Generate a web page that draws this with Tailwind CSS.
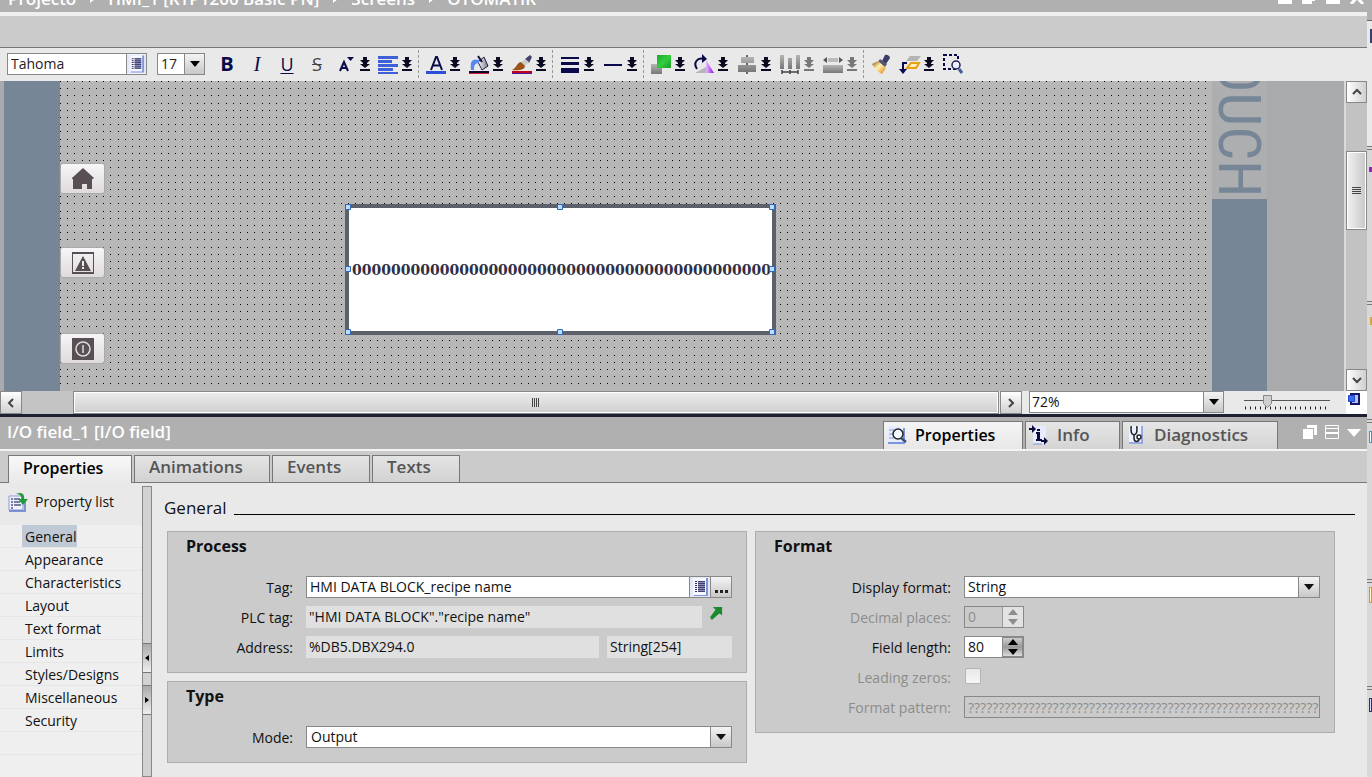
<!DOCTYPE html>
<html lang="en">
<head>
<meta charset="utf-8">
<title>HMI screen editor</title>
<script src="https://cdn.jsdelivr.net/npm/@tailwindcss/browser@4"></script>
</head>
<body class="flex h-screen overflow-hidden bg-[#e9e9e9] font-['Open_Sans','Noto_Sans',sans-serif] text-[14px] leading-5 text-[#111]">
<svg class="absolute h-0 w-0" aria-hidden="true">
  <defs>
    <linearGradient id="gGreen" x1="0" y1="0" x2="1" y2="1"><stop offset="0" stop-color="#1fa52e"/><stop offset=".5" stop-color="#31cf3d"/><stop offset="1" stop-color="#1a9a2a"/></linearGradient>
    <linearGradient id="gGray" x1="0" y1="0" x2="0" y2="1"><stop offset="0" stop-color="#b5b5b5"/><stop offset="1" stop-color="#777"/></linearGradient>
    <linearGradient id="gGold" x1="0" y1="0" x2="1" y2="1"><stop offset="0" stop-color="#8a4a10"/><stop offset=".45" stop-color="#fff3b0"/><stop offset="1" stop-color="#e07808"/></linearGradient>
    <linearGradient id="gPurple" x1="0" y1="0" x2="1" y2="0"><stop offset="0" stop-color="#e9b8ff"/><stop offset="1" stop-color="#8b12e8"/></linearGradient>
    <linearGradient id="gPot" x1="0" y1="0" x2="1" y2="0"><stop offset="0" stop-color="#fff"/><stop offset="1" stop-color="#77778c"/></linearGradient>
    <symbol id="drop" viewBox="0 0 10 14"><path d="M3 0h4v3h3L7 6v1h3L5 11 0 7h3V6L0 3h3z" fill="currentColor"/><path d="M0 12h10v2H0z" fill="currentColor"/></symbol>
    <symbol id="list" viewBox="0 0 20 20"><rect width="20" height="20" fill="#e4e8fb"/><rect x="3" y="1" width="13" height="17" fill="#f7f8ff"/><path d="M16 1h2v18H4v-1h12z" fill="#7f96dc"/><path d="M5 4h2v1H5zM8 4h7v1H8zM5 6h2v1H5zM8 6h7v1H8zM5 8h2v1H5zM8 8h7v1H8zM5 10h2v1H5zM8 10h7v1H8zM5 12h2v1H5zM8 12h7v1H8zM5 14h2v1H5zM8 14h7v1H8z" fill="#33335f"/><path d="M8 4h7v11H8z" fill="#4a4a80" opacity=".6"/></symbol>
    <symbol id="tri" viewBox="0 0 10 6"><path d="M0 0h10L5 6z" fill="currentColor"/></symbol>
    <symbol id="chev" viewBox="0 0 10 10"><path d="M1 7l4-4 4 4" fill="none" stroke="#444" stroke-width="2"/></symbol>
  </defs>
</svg>

<div class="flex min-w-0 flex-1 flex-col">
  <!-- breadcrumb -->
  <header class="flex h-3 shrink-0 items-end justify-between overflow-hidden bg-[#b0b0b0] pr-[2px] pl-2 text-white">
    <nav class="mb-[3px] flex items-center gap-3 text-[17px] leading-5 font-semibold" aria-label="Path">
      <a href="#">Projecto</a><svg class="h-2 w-2" viewBox="0 0 8 8"><path d="M2 0l5 4-5 4z" fill="#fff"/></svg>
      <a href="#">HMI_1 [KTP1200 Basic PN]</a><svg class="h-2 w-2" viewBox="0 0 8 8"><path d="M2 0l5 4-5 4z" fill="#fff"/></svg>
      <a href="#">Screens</a><svg class="h-2 w-2" viewBox="0 0 8 8"><path d="M2 0l5 4-5 4z" fill="#fff"/></svg>
      <a href="#">OTOMATIK</a>
    </nav>
    <div class="mb-2 flex items-end gap-2">
      <button aria-label="Minimize"><svg class="block h-3 w-4" viewBox="0 0 16 12"><path d="M1 8h14v4H1z" fill="#fff"/></svg></button>
      <button aria-label="Restore"><svg class="block h-3 w-4" viewBox="0 0 16 12"><path d="M4 0h10v9h-3v3H1V4h3z" fill="#fff"/></svg></button>
      <button aria-label="Maximize"><svg class="block h-3 w-4" viewBox="0 0 16 12"><path d="M1 0h14v12H1z" fill="#fff"/></svg></button>
      <button aria-label="Close"><svg class="block h-3 w-4" viewBox="0 0 16 12"><path d="M2 -1l12 13M14 -1L2 12" stroke="#fff" stroke-width="3"/></svg></button>
    </div>
  </header>
  <div class="h-9 shrink-0 border-t-4 border-b border-t-[#f0f0f0] border-b-[#777] bg-[#cbcbcb]"></div>

  <!-- toolbar -->
  <div class="flex h-[33px] shrink-0 items-center pb-px pl-[7px] text-[#0a0a4a]" role="toolbar" aria-label="Format">
    <div class="flex h-[22px] w-[140px] border border-[#888] bg-white">
      <input class="min-w-0 flex-1 pl-[3px] text-[#222] outline-none" aria-label="Font" value="Tahoma">
      <button class="w-5 border-l border-[#888]" aria-label="Font list"><svg class="block h-5 w-full"><use href="#list"/></svg></button>
    </div>
    <div class="ml-[10px] flex h-[22px] w-12 border border-[#888] bg-white">
      <input class="min-w-0 flex-1 pl-[3px] text-[#222] outline-none" aria-label="Font size" value="17">
      <button class="flex w-5 items-center justify-center border-l border-[#888] bg-linear-to-b from-[#f4f4f4] to-[#c8c8c8] text-black" aria-label="Font sizes"><svg class="h-[6px] w-[10px]"><use href="#tri"/></svg></button>
    </div>
    <div class="ml-[10px] flex items-center gap-[6px] text-[20px] leading-6">
      <button class="w-6 font-bold">B</button>
      <button class="w-6 font-['Liberation_Serif',serif] italic">I</button>
      <button class="w-6 text-[18px] underline underline-offset-2">U</button>
      <button class="w-6 text-[18px] text-[#444] line-through">S</button>
      <button class="flex items-center" aria-label="Text size"><svg class="h-6 w-6" viewBox="0 0 24 24"><path d="M5 19L9 10h0l4 9M6.500 16h5" fill="none" stroke="#0a0a4a" stroke-width="2"/><path d="M12 5h7l-3.500 4z" fill="#0a0a4a"/></svg><svg class="mr-[3px] ml-px h-[14px] w-[10px] text-[#0a0a20]"><use href="#drop"/></svg></button>
    </div>
    <div class="ml-[3px] flex items-center">
      <button class="flex items-center" aria-label="Align text"><svg class="h-6 w-6" viewBox="0 0 24 24"><path d="M2 4h20v3H2zM2 8h14v3H2zM2 12h20v3H2zM2 16h15v3H2zM2 20h20v2H2z" fill="#3f5fd8"/></svg><svg class="mx-[2px] h-[14px] w-[10px] text-[#0a0a20]"><use href="#drop"/></svg></button>
    </div>
    <span class="mr-[5px] ml-1 h-7 border-l border-dashed border-[#999]"></span>
    <div class="flex items-center gap-[5px]">
      <button class="flex items-center" aria-label="Text colour"><svg class="h-6 w-6" viewBox="0 0 24 24"><path d="M7 18l5-13h1l5 13M9 13.500h7" fill="none" stroke="#0a0a4a" stroke-width="2"/><path d="M2 19h20v3H2z" fill="#2b50d8"/></svg><svg class="mx-[2px] h-[14px] w-[10px] text-[#0a0a20]"><use href="#drop"/></svg></button>
      <button class="flex items-center" aria-label="Fill colour"><svg class="h-6 w-6" viewBox="0 0 24 24"><path d="M11 10l6-5 4 9-6 4z" fill="url(#gPot)" stroke="#222244"/><path d="M11 4l4 6" stroke="#111133" stroke-width="2"/><path d="M12 8C5 6 3 9 4 18h3c0-5 1-7 5-7z" fill="#5a86f0"/><path d="M2 19h20v2H2z" fill="#080830"/><path d="M2 21h20v1H2z" fill="#d02030"/></svg><svg class="mx-[2px] h-[14px] w-[10px] text-[#0a0a20]"><use href="#drop"/></svg></button>
      <button class="flex items-center" aria-label="Line colour"><svg class="h-6 w-6" viewBox="0 0 24 24"><path d="M20 3l-5 4 4 4 3-6z" fill="#43436c"/><path d="M15 7l-4 4 4 3 4-4z" fill="#ccc"/><path d="M11 10c-5 1-4 6-9 8 6 1 13 0 13-4z" fill="#9a5418"/><path d="M2 19h20v2H2z" fill="#c00018"/><path d="M2 21h20v1H2z" fill="#4818a0"/></svg><svg class="mx-[2px] h-[14px] w-[10px] text-[#0a0a20]"><use href="#drop"/></svg></button>
    </div>
    <span class="mr-[5px] ml-1 h-7 border-l border-dashed border-[#999]"></span>
    <div class="flex items-center gap-[5px]">
      <button class="flex items-center" aria-label="Line width"><svg class="h-6 w-6" viewBox="0 0 24 24"><path d="M3 5h18v2H3zM3 10h18v3H3zM3 16h18v5H3z" fill="#0a0a4a"/></svg><svg class="mx-[2px] h-[14px] w-[10px] text-[#0a0a20]"><use href="#drop"/></svg></button>
      <button class="flex items-center" aria-label="Line style"><svg class="h-6 w-6" viewBox="0 0 24 24"><path d="M3 12h18v2H3z" fill="#0a0a4a"/></svg><svg class="mx-[2px] h-[14px] w-[10px] text-[#0a0a20]"><use href="#drop"/></svg></button>
    </div>
    <span class="mr-[5px] ml-1 h-7 border-l border-dashed border-[#999]"></span>
    <div class="flex items-center gap-[5px]">
      <button class="flex items-center" aria-label="Order"><svg class="h-6 w-6" viewBox="0 0 24 24"><path d="M2 12h11v10H2z" fill="url(#gGray)"/><path d="M8 3h14v13H8z" fill="url(#gGreen)"/></svg><svg class="mx-[2px] h-[14px] w-[10px] text-[#0a0a20]"><use href="#drop"/></svg></button>
      <button class="flex items-center" aria-label="Rotate"><svg class="h-6 w-6" viewBox="0 0 24 24"><path d="M3 21h11v-6z" fill="#b5b5b5"/><path d="M14 8v13h8z" fill="url(#gPurple)"/><path d="M5 17C1 11 5 5 12 7" fill="none" stroke="#0a0a4a" stroke-width="2"/><path d="M10 2v9l5-4z" fill="#0a0a4a"/></svg><svg class="mx-[2px] h-[14px] w-[10px] text-[#0a0a20]"><use href="#drop"/></svg></button>
      <button class="flex items-center" aria-label="Align objects"><svg class="h-6 w-6" viewBox="0 0 24 24"><path d="M11 3h2v19h-2z" fill="#666"/><path d="M6 5h13v6H6zM3 13h18v7H3z" fill="url(#gGray)"/></svg><svg class="mx-[2px] h-[14px] w-[10px] text-[#0a0a20]"><use href="#drop"/></svg></button>
      <button class="flex items-center" aria-label="Distribute"><svg class="h-6 w-6" viewBox="0 0 24 24"><path d="M2 3h4v14H2zM10 6h4v11h-4zM18 3h4v14h-4z" fill="url(#gGray)"/><path d="M4 20h16M4 18v4M12 18v4M20 18v4" stroke="#444" stroke-width="1.500"/></svg><svg class="mx-[2px] h-[14px] w-[10px] text-[#777]"><use href="#drop"/></svg></button>
      <button class="flex items-center" aria-label="Match size"><svg class="h-6 w-6" viewBox="0 0 24 24"><path d="M7 6h10v4H7z" fill="#bbb"/><path d="M6 5v6L2 8zM18 5v6l4-3z" fill="#555"/><path d="M2 13h20v8H2z" fill="url(#gGray)"/></svg><svg class="mx-[2px] h-[14px] w-[10px] text-[#777]"><use href="#drop"/></svg></button>
    </div>
    <span class="mr-[5px] ml-1 h-7 border-l border-dashed border-[#999]"></span>
    <div class="flex items-center gap-[5px]">
      <button aria-label="Format painter"><svg class="h-6 w-6" viewBox="0 0 24 24"><path d="M13 9l3-6c2-1 5 1 5 3l-4 6z" fill="#3c3c66"/><path d="M11 7l7 5-2 3-7-5z" fill="#555570"/><path d="M9 9l8 7-4 6C9 20 5 16 3 12z" fill="url(#gGold)"/></svg></button>
      <button class="flex items-center" aria-label="Layers"><svg class="h-6 w-6" viewBox="0 0 24 24"><path d="M12 4h11l-4 5H8z" fill="#b5b5b5"/><path d="M13 11h8l-3 5h-9z" fill="#fff0c0" stroke="#eaa010" stroke-width="2"/><path d="M5 10v8M5 11h4" stroke="#0a0a4a" stroke-width="2"/><path d="M1 17h8l-4 5z" fill="#0a0a4a"/></svg><svg class="mx-[2px] h-[14px] w-[10px] text-[#0a0a20]"><use href="#drop"/></svg></button>
      <button aria-label="Zoom selection"><svg class="h-6 w-6" viewBox="0 0 24 24"><path d="M3 3h14v14H3z" fill="none" stroke="#0a0a4a" stroke-width="2" stroke-dasharray="3 2"/><circle cx="15" cy="13" r="4" fill="#edf1ff" stroke="#222252" stroke-width="1.500"/><path d="M18 17l3 4" stroke="#44628e" stroke-width="3"/></svg></button>
    </div>
  </div>

  <!-- design canvas -->
  <div class="flex h-[310px] shrink-0">
    <div class="relative flex min-w-0 flex-1 overflow-hidden bg-[#a8aaab]">
      <div class="ml-1 w-14 shrink-0 bg-[#778696]"></div>
      <svg class="h-full min-w-0 flex-1 bg-[#b7b7b7]" aria-hidden="true">
        <pattern id="dots" width="36" height="36" patternUnits="userSpaceOnUse"><path shape-rendering="crispEdges" fill="#000" d="M0 0h1v1H0zM7 0h1v1H7zM14 0h1v1h-1zM22 0h1v1h-1zM29 0h1v1h-1zM0 7h1v1H0zM7 7h1v1H7zM14 7h1v1h-1zM22 7h1v1h-1zM29 7h1v1h-1zM0 14h1v1H0zM7 14h1v1H7zM14 14h1v1h-1zM22 14h1v1h-1zM29 14h1v1h-1zM0 22h1v1H0zM7 22h1v1H7zM14 22h1v1h-1zM22 22h1v1h-1zM29 22h1v1h-1zM0 29h1v1H0zM7 29h1v1H7zM14 29h1v1h-1zM22 29h1v1h-1zM29 29h1v1h-1z"/></pattern>
        <rect width="100%" height="100%" fill="url(#dots)"/>
      </svg>
      <div class="flex w-[55px] shrink-0 flex-col">
        <div class="flex h-[118px] flex-col items-center justify-end overflow-hidden bg-[#acaeaf]"><span class="[writing-mode:vertical-rl] pb-[2px] font-['Roboto_Condensed','Open_Sans_Condensed','Liberation_Sans_Narrow','Liberation_Sans',sans-serif] text-[60px] leading-[55px] text-[#778696]">TOUCH</span></div>
        <div class="flex-1 bg-[#778696]"></div>
      </div>
      <div class="w-[77px] shrink-0"></div>

      <!-- objects on the screen -->
      <button class="absolute top-[83px] left-[61px] flex h-[29px] w-[43px] items-center justify-center rounded-[2px] bg-linear-to-b from-[#f7f5f7] to-[#dfdbdd] shadow-[0_0_1px_1px_#aaa]" aria-label="Home"><svg class="h-[22px] w-[22px]" viewBox="0 0 22 22"><path d="M11 0l11 10-1 1h-1v10h-5v-5h-5v5H1V11H0v-1z" fill="#574f53"/></svg></button>
      <button class="absolute top-[167px] left-[61px] flex h-[29px] w-[43px] items-center justify-center rounded-[2px] bg-linear-to-b from-[#f7f5f7] to-[#dfdbdd] shadow-[0_0_1px_1px_#aaa]" aria-label="Alarms"><svg class="h-[22px] w-[22px]" viewBox="0 0 22 22"><path d="M.5 1.500h21v19H.5z" fill="none" stroke="#574f53"/><path d="M0 0h22v2H0zM0 20h22v2H0z" fill="#574f53"/><path d="M11 4l8 15H3z" fill="#574f53"/><path d="M10 9h2v5h-2zM10 15h2v2h-2z" fill="#eee"/></svg></button>
      <button class="absolute top-[253px] left-[61px] flex h-[29px] w-[43px] items-center justify-center rounded-[2px] bg-linear-to-b from-[#f7f5f7] to-[#dfdbdd] shadow-[0_0_1px_1px_#aaa]" aria-label="Power"><svg class="h-[22px] w-[22px]" viewBox="0 0 22 22"><path d="M0 0h22v22H0z" fill="#574f53"/><circle cx="11" cy="11" r="7" fill="none" stroke="#ddd" stroke-width="1.500"/><path d="M11 7v8" stroke="#ddd" stroke-width="1.500"/></svg></button>
      <div class="absolute top-[123px] left-[345px] h-[131px] w-[431px] border-4 border-[#5c616c] bg-white">
        <div class="flex h-full items-center overflow-hidden pl-[3px] font-['DejaVu_Serif',serif] text-[14px] font-bold whitespace-nowrap text-[#302f45]">00000000000000000000000000000000000000000000</div>
        <svg class="absolute -top-1 -left-1 h-[131px] w-[431px]" viewBox="0 0 431 131" aria-hidden="true"><path d="M.5 .5h5v5h-5zM212.500 .5h5v5h-5zM424.500 .5h5v5h-5zM.5 62.500h5v5h-5zM424.500 62.500h5v5h-5zM.5 125.500h5v5h-5zM212.500 125.500h5v5h-5zM424.500 125.500h5v5h-5z" fill="#b9dcff" stroke="#2f68b8"/></svg>
      </div>
    </div>
    <div class="flex w-[23px] flex-col border-l-2 border-[#dadada] bg-[#c2c2c2]" aria-label="Vertical scroll">
      <button class="flex h-[22px] items-center justify-center border border-[#888] bg-linear-to-r from-white to-[#cfcfcf]" aria-label="Scroll up"><svg class="h-[10px] w-[10px]"><use href="#chev"/></svg></button>
      <div class="mt-12 flex h-[79px] items-center justify-center border border-[#888] bg-linear-to-r from-[#f2f2f2] to-[#c8c8c8] shadow-[inset_0_0_0_1px_white]"><svg class="h-2 w-[9px]" viewBox="0 0 9 8"><path d="M0 .5h9M0 2.500h9M0 4.500h9M0 6.500h9" stroke="#444"/></svg></div>
      <button class="mt-auto flex h-[22px] items-center justify-center border border-[#888] bg-linear-to-r from-white to-[#cfcfcf]" aria-label="Scroll down"><svg class="h-[10px] w-[10px] rotate-180"><use href="#chev"/></svg></button>
    </div>
  </div>

  <!-- horizontal scroll and zoom -->
  <div class="flex h-[26px] shrink-0 border-b-[3px] border-[#1e2230]">
    <button class="flex w-[22px] items-center justify-center border border-[#888] bg-linear-to-b from-white to-[#d0d0d0]" aria-label="Scroll left"><svg class="h-[10px] w-[10px] -rotate-90"><use href="#chev"/></svg></button>
    <div class="w-[51px] bg-[#c4c4c4]"></div>
    <div class="flex flex-1 items-center justify-center border border-[#888] bg-linear-to-b from-[#ececec] to-[#cfcfcf] shadow-[inset_0_0_0_1px_white]"><svg class="h-[9px] w-2" viewBox="0 0 8 9"><path d="M.5 0v9M2.500 0v9M4.500 0v9M6.500 0v9" stroke="#444"/></svg></div>
    <button class="ml-px flex w-[22px] items-center justify-center border border-[#888] bg-linear-to-b from-white to-[#d0d0d0]" aria-label="Scroll right"><svg class="h-[10px] w-[10px] rotate-90"><use href="#chev"/></svg></button>
    <div class="ml-[7px] flex h-[22px] w-[195px] border border-[#888] bg-white">
      <select class="min-w-0 flex-1 appearance-none pl-[2px] outline-none" aria-label="Zoom"><option>72%</option></select>
      <span class="flex w-5 items-center justify-center border-l border-[#888] bg-linear-to-b from-[#f4f4f4] to-[#c8c8c8] text-black"><svg class="h-[6px] w-[10px]"><use href="#tri"/></svg></span>
    </div>
    <div class="relative ml-5 w-[86px]">
      <svg class="block h-[23px] w-full" viewBox="0 0 86 23" aria-hidden="true"><path d="M0 9.500h86" stroke="#555"/><path d="M1 17h85" stroke="#222" stroke-width="3" stroke-dasharray="1 4"/><path d="M19.500 4.500h8v8l-4 4-4-4z" fill="#d0d0d0" stroke="#888"/></svg>
      <input class="absolute inset-0 w-full opacity-0" type="range" aria-label="Zoom slider" value="27">
    </div>
    <div class="ml-4 w-[21px] bg-white"><svg class="h-[23px] w-[21px]" viewBox="0 0 21 23"><path d="M5 3h8v10H5z" fill="#b9c4f5" stroke="#17176a" stroke-width="2"/><path d="M2.500 4.500h6v6h-6z" fill="#3d6cf2" stroke="#1f44c0"/></svg></div>
  </div>

  <!-- inspector header -->
  <div class="flex h-[34px] shrink-0 items-stretch border-b-2 border-[#f3f3f3] bg-[#b0b0b0] pl-[7px] text-[17px] font-semibold">
    <h1 class="flex-1 self-center pb-[2px] text-white">I/O field_1 [I/O field]</h1>
    <div class="mt-1 flex gap-[2px] text-[#555]" role="tablist" aria-label="Inspector">
      <button role="tab" aria-selected="true" class="flex w-[140px] items-center gap-2 border-t border-r border-l border-[#777] bg-linear-to-b from-[#f5f5f5] to-[#e7e7e7] pb-[2px] pl-[3px] text-[16px] text-black"><svg class="h-5 w-5" viewBox="0 0 20 20"><path d="M1 1h13v17H1z" fill="#e6ecff"/><path d="M1 18h16V3" fill="none" stroke="#7b95dd" stroke-width="2"/><path d="M2 5h5M2 9h5M2 13h5" stroke="#8297ce"/><circle cx="11" cy="9" r="5" fill="#f4f8ff" stroke="#222" stroke-width="1.500"/><path d="M14 13l5 4" stroke="#355079" stroke-width="2.500"/></svg>Properties</button>
      <button role="tab" class="flex w-[95px] items-center gap-2 border-t border-r border-l border-[#777] bg-linear-to-b from-[#e6e6e6] to-[#d4d4d4] pb-[2px] pl-[3px]"><svg class="h-5 w-5" viewBox="0 0 20 20"><path d="M4 1h13v18H4z" fill="#e6ecff"/><path d="M4 19h9" stroke="#7b95dd"/><path d="M0 4h4M12 16h4" stroke="#0a0a3c" stroke-width="2"/><path d="M3 0l4 4-4 4zM15 12l4 4-4 4z" fill="#0a0a3c"/><path d="M8 4h3v2H8zM7 7h4v7h2v2H7v-2h1V9H7z" fill="#0a0a3c"/></svg>Info</button>
      <button role="tab" class="flex w-[156px] items-center gap-2 border-t border-r border-l border-[#777] bg-linear-to-b from-[#e6e6e6] to-[#d4d4d4] pb-[2px] pl-[3px]"><svg class="h-5 w-5" viewBox="0 0 20 20"><path d="M3 1h13v18H3z" fill="#eef1ff"/><path d="M3 18h13V1" fill="none" stroke="#7b95dd" stroke-width="1.500"/><path d="M6 2H5c0 5 0 7 3 8 3-1 3-3 3-8h-1M8 10v3c0 5 5 4 5 1" fill="none" stroke="#222" stroke-width="1.500"/><circle cx="13" cy="12" r="2" fill="#fff" stroke="#222" stroke-width="1.500"/></svg>Diagnostics</button>
    </div>
    <div class="ml-[25px] flex items-start gap-2 pt-2 pr-[6px]">
      <button aria-label="Float"><svg class="block h-[14px] w-[14px]" viewBox="0 0 14 14"><path d="M4 0h10v10h-3V3H4z" fill="#fff"/><path d="M0 4h10v10H0z" fill="#fff"/></svg></button>
      <button aria-label="Dock"><svg class="block h-[14px] w-[14px]" viewBox="0 0 14 14"><path d="M.5 .5h13v13H.5zM0 3.500h14M0 7.500h14M0 8.500h14" fill="none" stroke="#fff"/></svg></button>
      <button aria-label="Collapse" class="pt-1"><svg class="block h-2 w-[14px]" viewBox="0 0 14 8"><path d="M0 0h14L7 8z" fill="#fff"/></svg></button>
    </div>
  </div>

  <!-- property tabs -->
  <div class="flex h-8 shrink-0 gap-[2px] bg-[#cbcbcb] pt-1 pl-2 text-[17px] font-semibold text-[#555] shadow-[inset_0_-1px_0_#777]" role="tablist" aria-label="Field">
    <button role="tab" aria-selected="true" class="w-[124px] border-t border-r border-l border-[#777] bg-linear-to-b from-[#f8f8f8] to-[#e9e9e9] pb-1 pl-[14px] text-left text-[16px] text-black">Properties</button>
    <button role="tab" class="w-[136px] border border-[#777] bg-linear-to-b from-[#e4e4e4] to-[#d2d2d2] pb-1 pl-[14px] text-left">Animations</button>
    <button role="tab" class="w-[98px] border border-[#777] bg-linear-to-b from-[#e4e4e4] to-[#d2d2d2] pb-1 pl-[14px] text-left">Events</button>
    <button role="tab" class="w-[88px] border border-[#777] bg-linear-to-b from-[#e4e4e4] to-[#d2d2d2] pb-1 pl-[14px] text-left">Texts</button>
  </div>

  <div class="flex min-h-0 flex-1">
    <nav class="flex w-[142px] shrink-0 flex-col" aria-label="Property groups">
      <button class="mt-2 flex h-[22px] items-center gap-[7px] pl-2"><svg class="h-5 w-5" viewBox="0 0 20 20"><path d="M1 4h14v14H1z" fill="#eef2ff" stroke="#8c9bd0"/><path d="M1 19h16V8" fill="none" stroke="#5e78c8" stroke-width="1.500"/><path d="M3 7h2M6 7h6M3 10h2M6 10h6M3 13h2M6 13h7M3 16h2" stroke="#555580" stroke-width="1.500"/><path d="M8 2c6-3 9 1 8 5h4l-5 6-5-6h3c1-3-1-5-5-5z" fill="#219a3d"/></svg>Property list</button>
      <ul class="mt-3 flex-1 bg-[#efefef]">
        <li class="h-[23px] border-b border-[#e6e6e6] pl-[22px]"><a href="#" class="inline-block h-[22px] bg-[#c0cad6] pl-[3px] leading-6" aria-current="true">General</a></li>
        <li class="h-[23px] border-b border-[#e6e6e6] pl-[25px] leading-6"><a href="#">Appearance</a></li>
        <li class="h-[23px] border-b border-[#e6e6e6] pl-[25px] leading-6"><a href="#">Characteristics</a></li>
        <li class="h-[23px] border-b border-[#e6e6e6] pl-[25px] leading-6"><a href="#">Layout</a></li>
        <li class="h-[23px] border-b border-[#e6e6e6] pl-[25px] leading-6"><a href="#">Text format</a></li>
        <li class="h-[23px] border-b border-[#e6e6e6] pl-[25px] leading-6"><a href="#">Limits</a></li>
        <li class="h-[23px] border-b border-[#e6e6e6] pl-[25px] leading-6"><a href="#">Styles/Designs</a></li>
        <li class="h-[23px] border-b border-[#e6e6e6] pl-[25px] leading-6"><a href="#">Miscellaneous</a></li>
        <li class="h-[23px] border-b border-[#e6e6e6] pl-[25px] leading-6"><a href="#">Security</a></li>
        <li class="h-[23px] border-b border-[#e6e6e6]"></li>
      </ul>
    </nav>
    <div class="mt-[3px] flex w-[10px] shrink-0 flex-col border border-[#888] bg-[#d2d2d2] pt-[156px]">
      <button class="flex h-[30px] items-center justify-center border-y border-[#777] bg-linear-to-b from-[#aaa] to-[#eee]" aria-label="Collapse left"><svg class="h-[6px] w-1" viewBox="0 0 4 6"><path d="M4 0v6L0 3z"/></svg></button>
      <button class="mt-3 flex h-[30px] items-center justify-center border-y border-[#777] bg-linear-to-b from-[#aaa] to-[#eee]" aria-label="Expand right"><svg class="h-[6px] w-1" viewBox="0 0 4 6"><path d="M0 0v6l4-3z"/></svg></button>
    </div>

    <main class="flex min-w-0 flex-1 flex-col pt-[15px] pr-3 pl-3">
      <div class="flex items-center gap-[7px]"><h2 class="text-[17px] leading-5">General</h2><span class="mt-3 h-px flex-1 bg-black"></span></div>
      <div class="mt-[13px] mr-5 ml-[3px] grid grid-cols-2 items-start gap-2">
        <div class="flex flex-col gap-2">
          <section class="flex flex-col gap-2 border border-[#adadad] bg-[#cbcbcb] pr-[14px] pb-[14px]">
            <h3 class="mt-1 mb-[12px] pl-[18px] text-[16px] leading-5 font-bold">Process</h3>
            <div class="flex h-[22px] items-center gap-[13px]"><label for="tag" class="w-[125px] shrink-0 pt-[2px] text-right">Tag:</label>
              <div class="flex h-[22px] min-w-0 flex-1 border border-[#888] bg-white"><input id="tag" class="min-w-0 flex-1 pl-[3px] outline-none" value="HMI DATA BLOCK_recipe name"><button class="w-[21px] border-l border-[#888]" aria-label="Tag list"><svg class="block h-5 w-full"><use href="#list"/></svg></button><button class="flex w-[21px] items-end justify-center border-l border-[#888] bg-linear-to-b from-[#f4f4f4] to-[#c8c8c8] pb-1" aria-label="Browse"><svg class="h-[3px] w-[13px]" viewBox="0 0 13 3"><path d="M0 0h3v3H0zM5 0h3v3H5zM10 0h3v3h-3z" fill="#222"/></svg></button></div></div>
            <div class="flex h-[22px] items-center"><label for="plc" class="mr-[13px] w-[125px] shrink-0 pt-[2px] text-right">PLC tag:</label>
              <input id="plc" readonly class="h-[22px] min-w-0 flex-1 bg-[#e0e0e0] pb-px pl-[3px] outline-none" value="&quot;HMI DATA BLOCK&quot;.&quot;recipe name&quot;"><button class="ml-[6px] w-6" aria-label="Go to tag"><svg class="mb-2 ml-[2px] block h-[13px] w-[13px]" viewBox="0 0 14 14"><path d="M3 0h10v9l-3-2-8 7-2-3 6-8z" fill="#1a8a2c"/></svg></button></div>
            <div class="flex h-[22px] items-center"><label for="addr" class="mr-[13px] w-[125px] shrink-0 pt-[2px] text-right">Address:</label>
              <input id="addr" readonly class="h-[22px] min-w-0 flex-1 bg-[#e0e0e0] pb-px pl-[3px] outline-none" value="%DB5.DBX294.0"><input readonly aria-label="Data type" class="ml-2 h-[22px] w-[125px] bg-[#e0e0e0] pb-px pl-[3px] outline-none" value="String[254]"></div>
          </section>
          <section class="flex flex-col gap-2 border border-[#adadad] bg-[#cbcbcb] pr-[14px] pb-[14px]">
            <h3 class="mt-1 mb-[12px] pl-[18px] text-[16px] leading-5 font-bold">Type</h3>
            <div class="flex h-[22px] items-center gap-[13px]"><label for="mode" class="w-[125px] shrink-0 pt-[2px] text-right">Mode:</label>
              <div class="flex h-[22px] min-w-0 flex-1 border border-[#888] bg-white"><select id="mode" class="min-w-0 flex-1 appearance-none pl-1 outline-none"><option>Output</option></select><span class="flex w-[21px] items-center justify-center border-l border-[#888] bg-linear-to-b from-[#f4f4f4] to-[#c8c8c8]"><svg class="h-[6px] w-[10px]"><use href="#tri"/></svg></span></div></div>
          </section>
        </div>
        <section class="flex flex-col gap-2 border border-[#adadad] bg-[#cbcbcb] pr-[14px] pb-[14px]">
          <h3 class="mt-1 mb-[12px] pl-[18px] text-[16px] leading-5 font-bold">Format</h3>
          <div class="flex h-[22px] items-center gap-[13px]"><label for="df" class="w-[195px] shrink-0 pt-[2px] text-right">Display format:</label>
            <div class="flex h-[22px] min-w-0 flex-1 border border-[#888] bg-white"><select id="df" class="min-w-0 flex-1 appearance-none pl-[3px] outline-none"><option>String</option></select><span class="flex w-[21px] items-center justify-center border-l border-[#888] bg-linear-to-b from-[#f4f4f4] to-[#c8c8c8]"><svg class="h-[6px] w-[10px]"><use href="#tri"/></svg></span></div></div>
          <div class="flex h-[22px] items-center gap-[13px] text-[#8d8d8d]"><label for="dp" class="w-[195px] shrink-0 pt-[2px] text-right">Decimal places:</label>
            <div class="flex h-[22px] w-[60px] border border-[#888]"><input id="dp" disabled class="min-w-0 flex-1 pl-[3px]" value="0"><button disabled class="flex w-[21px] flex-col items-center justify-center gap-1 border-l border-[#999] bg-[#e2e2e2]" aria-label="Step decimal places"><svg class="h-[6px] w-[10px] rotate-180"><use href="#tri"/></svg><svg class="h-[6px] w-[10px]"><use href="#tri"/></svg></button></div></div>
          <div class="flex h-[22px] items-center gap-[13px]"><label for="fl" class="w-[195px] shrink-0 pt-[2px] text-right">Field length:</label>
            <div class="flex h-[22px] w-[60px] border border-[#888] bg-white"><input id="fl" class="min-w-0 flex-1 pl-[3px] outline-none" value="80"><button class="flex w-[21px] flex-col items-center justify-center gap-1 border border-[#888] bg-linear-to-b from-[#ccc] via-[#999] to-[#ddd] text-black" aria-label="Step field length"><svg class="h-[6px] w-[10px] rotate-180"><use href="#tri"/></svg><svg class="h-[6px] w-[10px]"><use href="#tri"/></svg></button></div></div>
          <div class="flex h-[22px] items-center gap-[13px] text-[#8d8d8d]"><label for="lz" class="w-[195px] shrink-0 pt-[2px] text-right">Leading zeros:</label>
            <input id="lz" type="checkbox" disabled class="mb-[2px] ml-[1px] h-4 w-4 appearance-none rounded-[2px] border border-[#b4b4b4] bg-linear-to-b from-[#e8e8e8] to-[#f6f6f6]"></div>
          <div class="flex h-[22px] items-center gap-[13px] text-[#8d8d8d]"><label for="fp" class="w-[195px] shrink-0 pt-[2px] text-right">Format pattern:</label>
            <input id="fp" disabled class="h-[22px] min-w-0 flex-1 border border-[#888] pl-[3px]" value="????????????????????????????????????????????????????????????????????????????????"></div>
        </section>
      </div>
    </main>
  </div>
</div>

<!-- edge of the collapsed task cards -->
<aside class="flex w-[5px] shrink-0 flex-col bg-[#d8d8d8]" aria-label="Task cards">
  <div class="h-[21px] border-b border-[#666] bg-[#b0b0b0]"></div>
  <div class="h-[125px] bg-[#e9e9e9] pt-2 pl-[3px]"><div class="h-[14px] bg-[#34406f]"></div></div>
  <div class="h-[155px] border-t-4 border-double border-[#777] pt-[17px] pl-[2px]"><div class="h-[5px] bg-[#9a20c0]"></div></div>
  <div class="h-[118px] border-t-4 border-double border-[#777] pt-3 pl-[3px]"><div class="h-2 bg-[#d7a640]"></div></div>
  <div class="h-[160px] border-t-4 border-double border-[#777] pt-2 pl-[2px]"><div class="h-3 border border-[#5590b0] bg-white"></div></div>
  <div class="h-[107px] border-t-4 border-double border-[#777] pt-1 pl-[2px]"><div class="h-4 border border-[#c69a40] bg-[#fff6d8]"></div></div>
  <div class="flex-1 border-t-4 border-double border-[#777] pt-2 pl-[2px]"><div class="h-[14px] border border-[#303070] bg-[#d8dcf5]"></div></div>
</aside>
</body>
</html>
